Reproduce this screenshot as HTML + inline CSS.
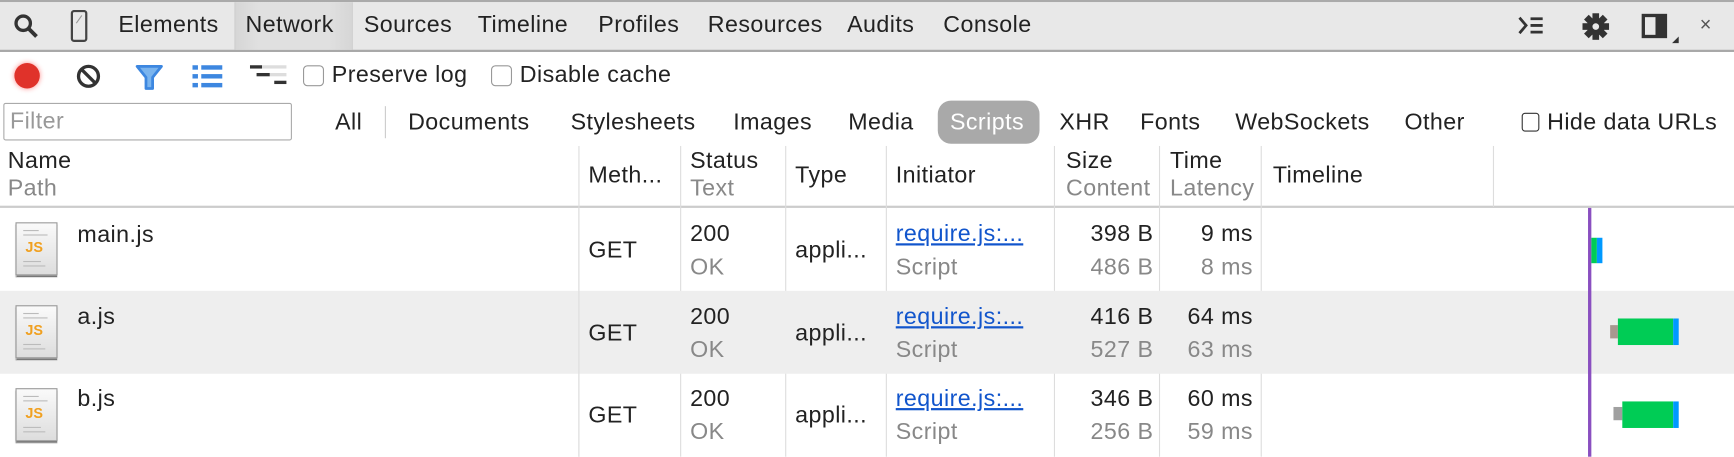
<!DOCTYPE html>
<html><head><meta charset="utf-8"><style>
html,body{margin:0;padding:0;width:1734px;height:456px;overflow:hidden;background:#fff}
#w{position:absolute;left:0;top:0;width:1568px;height:413px;transform:scale(1.10587);transform-origin:0 0;font-family:"Liberation Sans",sans-serif;font-size:21px;letter-spacing:0.4px;color:#222}
.a{position:absolute;white-space:nowrap}
.g{color:#888}
.cb{position:absolute;width:17px;height:17px;border:1px solid #999;border-radius:4px;background:#fff}
.vd{position:absolute;width:1px;background:#ddd;top:132px;height:281px}
.js{position:absolute;width:36px;height:46px;border:1px solid #999;background:linear-gradient(#fafafa,#ddd);box-shadow:0 2px 1px #777;letter-spacing:0}
.js b{position:absolute;left:8px;top:14px;font-size:13px;color:#f0a020;font-weight:bold}
.js i{position:absolute;left:6px;height:1px;background:#bbb}
.ln{text-decoration:underline;color:#1155cc}
</style></head><body><div id="w">
<div class="a" style="left:0;top:0;width:1568px;height:2px;background:#aaa"></div>
<div class="a" style="left:0;top:2px;width:1568px;height:43px;background:#e8e8e8;border-bottom:2px solid #a8a8a8"></div>
<div class="a" style="left:212px;top:2px;width:105px;height:43px;background:linear-gradient(90deg,#d6d6d6,#e0e0e0 20%,#e0e0e0 80%,#d6d6d6);border-left:1px solid #ccc;border-right:1px solid #ccc"></div>
<svg class="a" style="left:12px;top:12px" width="24" height="24"><circle cx="9" cy="9" r="6.5" fill="none" stroke="#333" stroke-width="3"/><line x1="14" y1="14" x2="21" y2="21" stroke="#333" stroke-width="3.5"/></svg>
<svg class="a" style="left:63px;top:9px" width="18" height="30"><rect x="2" y="1" width="13" height="27" rx="2" fill="none" stroke="#444" stroke-width="2"/><line x1="6" y1="12" x2="11" y2="5" stroke="#999"/></svg>
<div class="a" style="left:107px;top:11px">Elements</div>
<div class="a" style="left:222px;top:11px">Network</div>
<div class="a" style="left:329px;top:11px">Sources</div>
<div class="a" style="left:432px;top:11px">Timeline</div>
<div class="a" style="left:541px;top:11px">Profiles</div>
<div class="a" style="left:640px;top:11px">Resources</div>
<div class="a" style="left:766px;top:11px">Audits</div>
<div class="a" style="left:853px;top:11px">Console</div>
<svg class="a" style="left:1372px;top:13px" width="28" height="22"><path d="M2 3 L8 10 L2 17" fill="none" stroke="#333" stroke-width="2.5"/><path d="M12 4h11M12 10h11M12 16h11" stroke="#333" stroke-width="2.5"/></svg>
<svg class="a" style="left:1430px;top:11px" width="26" height="26"><g transform="translate(13 13)" fill="#333"><circle r="8"/><rect x="-3" y="-12" width="6" height="24"/><rect x="-3" y="-12" width="6" height="24" transform="rotate(45)"/><rect x="-3" y="-12" width="6" height="24" transform="rotate(90)"/><rect x="-3" y="-12" width="6" height="24" transform="rotate(135)"/><circle r="3" fill="#e8e8e8"/></g></svg>
<svg class="a" style="left:1484px;top:12px" width="36" height="28"><rect x="2" y="2" width="20" height="19" fill="none" stroke="#333" stroke-width="3"/><rect x="13" y="2" width="9" height="19" fill="#333"/><path d="M28 27 L34 27 L34 21 Z" fill="#333"/></svg>
<div class="a" style="left:1537px;top:12px;font-size:18px;color:#555">×</div>
<div class="a" style="left:13px;top:57px;width:23px;height:23px;border-radius:50%;background:#e0322a;box-shadow:0 0 5px #f88"></div>
<svg class="a" style="left:68px;top:57px" width="24" height="24"><circle cx="12" cy="12" r="9" fill="none" stroke="#333" stroke-width="3"/><line x1="6" y1="6" x2="18" y2="18" stroke="#333" stroke-width="3"/></svg>
<svg class="a" style="left:122px;top:57px" width="26" height="26"><path d="M2 3 H24 L16 13 V23 H10 V13 Z" fill="#7ab4ee" stroke="#3d87e0" stroke-width="2.5" stroke-linejoin="round"/></svg>
<svg class="a" style="left:174px;top:58px" width="28" height="22"><g fill="#3d87e0"><rect x="0" y="1" width="5" height="4"/><rect x="8" y="1" width="19" height="4"/><rect x="0" y="9" width="5" height="4"/><rect x="8" y="9" width="19" height="4"/><rect x="0" y="17" width="5" height="4"/><rect x="8" y="17" width="19" height="4"/></g></svg>
<svg class="a" style="left:226px;top:58px" width="34" height="24"><rect x="0" y="1" width="11" height="3" fill="#333"/><rect x="11" y="1" width="22" height="3" fill="#ddd"/><rect x="6" y="8" width="12" height="3" fill="#333"/><rect x="18" y="8" width="15" height="3" fill="#ddd"/><rect x="22" y="15" width="11" height="3" fill="#333"/></svg>
<div class="cb" style="left:274px;top:59px"></div>
<div class="a" style="left:300px;top:56px">Preserve log</div>
<div class="cb" style="left:444px;top:59px"></div>
<div class="a" style="left:470px;top:56px">Disable cache</div>
<div class="a" style="left:3px;top:93px;width:259px;height:32px;border:1px solid #aaa;border-radius:2px;background:#fff"></div>
<div class="a" style="left:9px;top:98px;color:#999">Filter</div>
<div class="a" style="left:303px;top:99px">All</div>
<div class="a" style="left:348px;top:96px;width:1px;height:29px;background:#ccc"></div>
<div class="a" style="left:369px;top:99px">Documents</div>
<div class="a" style="left:516px;top:99px">Stylesheets</div>
<div class="a" style="left:663px;top:99px">Images</div>
<div class="a" style="left:767px;top:99px">Media</div>
<div class="a" style="left:848px;top:91px;width:92px;height:39px;border-radius:12px;background:#a9a9a9"></div>
<div class="a" style="left:859px;top:99px;color:#fff">Scripts</div>
<div class="a" style="left:958px;top:99px">XHR</div>
<div class="a" style="left:1031px;top:99px">Fonts</div>
<div class="a" style="left:1117px;top:99px">WebSockets</div>
<div class="a" style="left:1270px;top:99px">Other</div>
<div class="a" style="left:1376px;top:102px;width:14px;height:15px;border:1px solid #333;border-radius:3px"></div>
<div class="a" style="left:1399px;top:99px">Hide data URLs</div>
<div class="a" style="left:0;top:186px;width:1568px;height:2px;background:#ccc"></div>
<div class="vd" style="left:523px"></div><div class="vd" style="left:615px"></div><div class="vd" style="left:710px"></div><div class="vd" style="left:801px"></div><div class="vd" style="left:953px"></div><div class="vd" style="left:1048px"></div><div class="vd" style="left:1140px"></div><div class="vd" style="left:1350px;height:55px"></div>
<div class="a" style="left:7px;top:134px">Name</div><div class="a g" style="left:7px;top:159px">Path</div>
<div class="a" style="left:532px;top:147px">Meth...</div>
<div class="a" style="left:624px;top:134px">Status</div><div class="a g" style="left:624px;top:159px">Text</div>
<div class="a" style="left:719px;top:147px">Type</div>
<div class="a" style="left:810px;top:147px">Initiator</div>
<div class="a" style="left:964px;top:134px">Size</div><div class="a g" style="left:964px;top:159px;width:80px;overflow:hidden">Content</div>
<div class="a" style="left:1058px;top:134px">Time</div><div class="a g" style="left:1058px;top:159px;width:78px;overflow:hidden">Latency</div>
<div class="a" style="left:1151px;top:147px">Timeline</div>
<div class="a" style="left:0;top:263px;width:1568px;height:75px;background:#eeeeee"></div>
<div class="vd" style="left:523px;top:188px;height:225px"></div>
<div class="a" style="left:1436px;top:188px;width:3px;height:225px;background:#8a4fc0"></div>

<div class="js" style="left:14px;top:201px"><i style="top:6px;width:14px"></i><i style="top:10px;width:22px"></i><i style="top:34px;width:16px"></i><i style="top:38px;width:20px"></i><b>JS</b></div>
<div class="a" style="left:70px;top:201px">main.js</div>
<div class="a" style="left:532px;top:215px">GET</div>
<div class="a" style="left:624px;top:200px">200</div><div class="a g" style="left:624px;top:230px">OK</div>
<div class="a" style="left:719px;top:215px">appli...</div>
<div class="a ln" style="left:810px;top:200px">require.js:...</div><div class="a g" style="left:810px;top:230px">Script</div>
<div class="a" style="right:525px;top:200px">398 B</div><div class="a g" style="right:525px;top:230px">486 B</div>
<div class="a" style="right:435px;top:200px">9 ms</div><div class="a g" style="right:435px;top:230px">8 ms</div>
<div class="a" style="left:1439px;top:215px;width:5px;height:23px;background:#0c5"></div><div class="a" style="left:1444px;top:215px;width:5px;height:23px;background:#09f"></div>

<div class="js" style="left:14px;top:276px"><i style="top:6px;width:14px"></i><i style="top:10px;width:22px"></i><i style="top:34px;width:16px"></i><i style="top:38px;width:20px"></i><b>JS</b></div>
<div class="a" style="left:70px;top:275px">a.js</div>
<div class="a" style="left:532px;top:290px">GET</div>
<div class="a" style="left:624px;top:275px">200</div><div class="a g" style="left:624px;top:305px">OK</div>
<div class="a" style="left:719px;top:290px">appli...</div>
<div class="a ln" style="left:810px;top:275px">require.js:...</div><div class="a g" style="left:810px;top:305px">Script</div>
<div class="a" style="right:525px;top:275px">416 B</div><div class="a g" style="right:525px;top:305px">527 B</div>
<div class="a" style="right:435px;top:275px">64 ms</div><div class="a g" style="right:435px;top:305px">63 ms</div>
<div class="a" style="left:1456px;top:294px;width:7px;height:12px;background:#a89890"></div><div class="a" style="left:1463px;top:288px;width:50px;height:24px;background:#0c5"></div><div class="a" style="left:1513px;top:288px;width:5px;height:24px;background:#09f"></div>

<div class="js" style="left:14px;top:351px"><i style="top:6px;width:14px"></i><i style="top:10px;width:22px"></i><i style="top:34px;width:16px"></i><i style="top:38px;width:20px"></i><b>JS</b></div>
<div class="a" style="left:70px;top:349px">b.js</div>
<div class="a" style="left:532px;top:364px">GET</div>
<div class="a" style="left:624px;top:349px">200</div><div class="a g" style="left:624px;top:379px">OK</div>
<div class="a" style="left:719px;top:364px">appli...</div>
<div class="a ln" style="left:810px;top:349px">require.js:...</div><div class="a g" style="left:810px;top:379px">Script</div>
<div class="a" style="right:525px;top:349px">346 B</div><div class="a g" style="right:525px;top:379px">256 B</div>
<div class="a" style="right:435px;top:349px">60 ms</div><div class="a g" style="right:435px;top:379px">59 ms</div>
<div class="a" style="left:1459px;top:368px;width:8px;height:12px;background:#a0a0a0"></div><div class="a" style="left:1467px;top:363px;width:46px;height:24px;background:#0c5"></div><div class="a" style="left:1513px;top:363px;width:5px;height:24px;background:#09f"></div>
</div></body></html>
